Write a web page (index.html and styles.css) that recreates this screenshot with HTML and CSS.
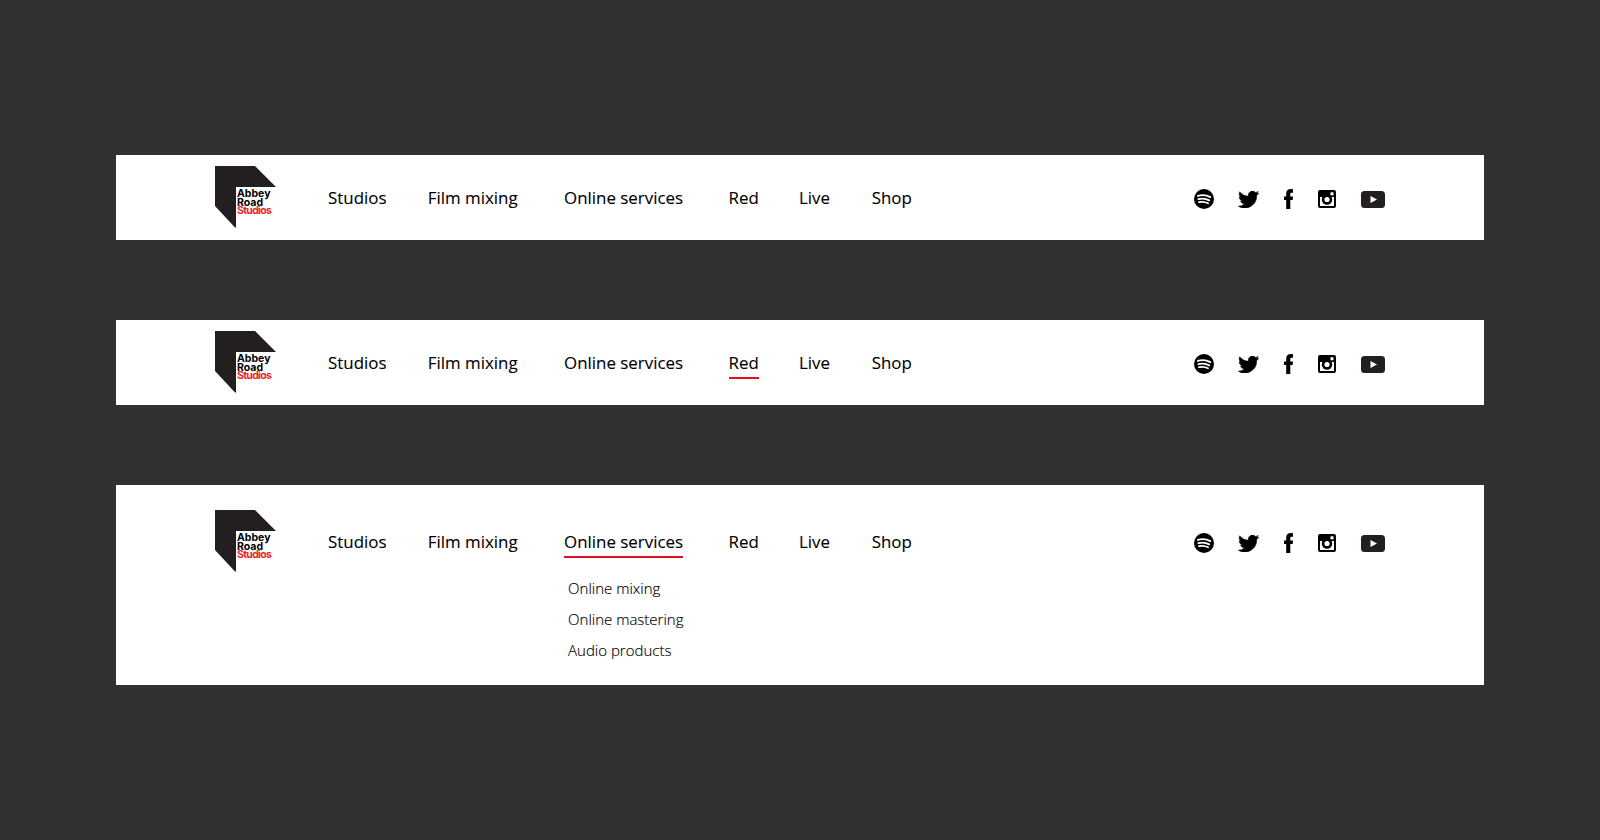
FILE: index.html
```html
<!DOCTYPE html>
<html lang="en">
<head>
<meta charset="utf-8">
<title>Abbey Road Studios navigation</title>
<link rel="stylesheet" href="styles.css">
</head>
<body>
<svg class="defs" width="0" height="0" aria-hidden="true">
  <symbol id="mark" viewBox="0 0 62 62">
    <path d="M0 0H40L61 21H21V61.500H20L0 40Z" fill="#231f20"/>
  </symbol>
  <symbol id="spotify" viewBox="0 0 20 20">
    <circle cx="10" cy="10" r="10" fill="#000"/>
    <path d="M3.800 6.900C8 5.700 12.600 6 16.300 8.100M4.400 10.200C8 9.300 12 9.600 15.200 11.400M5 13.200C8.100 12.500 11.300 12.800 14 14.300" fill="none" stroke="#fff" stroke-width="1.800" stroke-linecap="round"/>
  </symbol>
  <symbol id="twitter" viewBox="0 0 24 20">
    <path d="M24 2.400c-.9.400-1.800.7-2.800.8 1-.6 1.800-1.600 2.200-2.700-.9.600-2 1-3.100 1.200A4.900 4.900 0 0 0 11.900 6.200C7.800 6 4.200 4 1.700.9.400 3.100 1 6 3.200 7.500c-.8 0-1.600-.2-2.200-.6 0 2.400 1.700 4.400 3.900 4.900-.7.200-1.500.2-2.200.1.600 2 2.400 3.400 4.600 3.400A9.900 9.900 0 0 1 0 17.800 14 14 0 0 0 21.600 5.400c1-.7 1.800-1.600 2.400-3z" fill="#000" stroke="#000" stroke-width=".6"/>
  </symbol>
  <symbol id="facebook" viewBox="0 0 9 20">
    <path d="M6.300 20V11h2.400l.3-3.500H6.300V5.300c0-1 .3-1.500 1.500-1.500H9V.2C8.700.1 7.800 0 6.800 0 4 0 2.200 1.500 2.200 4.500v3H0V11h2.200v9z" fill="#000"/>
  </symbol>
  <symbol id="instagram" viewBox="0 0 18 18">
    <rect width="18" height="18" rx="2" fill="#000"/>
    <rect x="2" y="7" width="14" height="9" fill="#fff"/>
    <rect x="12.500" y="2.300" width="3" height="3" fill="#fff"/>
    <circle cx="9" cy="9.500" r="5.200" fill="#000"/>
    <circle cx="9" cy="9.500" r="2.600" fill="#fff"/>
  </symbol>
  <symbol id="youtube" viewBox="0 0 24 17">
    <path fill-rule="evenodd" d="M3.500 0h17A3.500 3.500 0 0 1 24 3.500v10a3.500 3.500 0 0 1-3.500 3.500h-17A3.500 3.500 0 0 1 0 13.500v-10A3.500 3.500 0 0 1 3.500 0zM9.500 5v7l6.500-3.500z" fill="#231f20"/>
  </symbol>
</svg>

<main class="stack">
  <header class="bar">
    <a class="logo"><svg class="mark"><use href="#mark"/></svg><span class="wordmark"><span>Abbey</span><span>Road</span><span class="wordmark-red">Studios</span></span></a>
    <nav class="nav">
      <a class="nav-item item-studios">Studios</a>
      <a class="nav-item item-film">Film mixing</a>
      <a class="nav-item item-online">Online services</a>
      <a class="nav-item item-red">Red</a>
      <a class="nav-item item-live">Live</a>
      <a class="nav-item item-shop">Shop</a>
    </nav>
    <div class="social">
      <svg class="ic ic-spotify"><use href="#spotify"/></svg>
      <svg class="ic ic-twitter"><use href="#twitter"/></svg>
      <svg class="ic ic-facebook"><use href="#facebook"/></svg>
      <svg class="ic ic-instagram"><use href="#instagram"/></svg>
      <svg class="ic ic-youtube"><use href="#youtube"/></svg>
    </div>
  </header>

  <header class="bar">
    <a class="logo"><svg class="mark"><use href="#mark"/></svg><span class="wordmark"><span>Abbey</span><span>Road</span><span class="wordmark-red">Studios</span></span></a>
    <nav class="nav">
      <a class="nav-item item-studios">Studios</a>
      <a class="nav-item item-film">Film mixing</a>
      <a class="nav-item item-online">Online services</a>
      <a class="nav-item item-red is-active">Red</a>
      <a class="nav-item item-live">Live</a>
      <a class="nav-item item-shop">Shop</a>
    </nav>
    <div class="social">
      <svg class="ic ic-spotify"><use href="#spotify"/></svg>
      <svg class="ic ic-twitter"><use href="#twitter"/></svg>
      <svg class="ic ic-facebook"><use href="#facebook"/></svg>
      <svg class="ic ic-instagram"><use href="#instagram"/></svg>
      <svg class="ic ic-youtube"><use href="#youtube"/></svg>
    </div>
  </header>

  <header class="bar bar-open">
    <a class="logo"><svg class="mark"><use href="#mark"/></svg><span class="wordmark"><span>Abbey</span><span>Road</span><span class="wordmark-red">Studios</span></span></a>
    <nav class="nav">
      <a class="nav-item item-studios">Studios</a>
      <a class="nav-item item-film">Film mixing</a>
      <div class="nav-group item-online">
        <a class="nav-item is-active">Online services</a>
        <ul class="submenu">
          <li>Online mixing</li>
          <li>Online mastering</li>
          <li>Audio products</li>
        </ul>
      </div>
      <a class="nav-item item-red">Red</a>
      <a class="nav-item item-live">Live</a>
      <a class="nav-item item-shop">Shop</a>
    </nav>
    <div class="social">
      <svg class="ic ic-spotify"><use href="#spotify"/></svg>
      <svg class="ic ic-twitter"><use href="#twitter"/></svg>
      <svg class="ic ic-facebook"><use href="#facebook"/></svg>
      <svg class="ic ic-instagram"><use href="#instagram"/></svg>
      <svg class="ic ic-youtube"><use href="#youtube"/></svg>
    </div>
  </header>
</main>
</body>
</html>
```
FILE: styles.css
```css
* { box-sizing: border-box; }
html, body { margin: 0; height: 100%; }
body { background: #313131; color: #000; font-family: "Open Sans", sans-serif; overflow: hidden; }
.defs { position: absolute; }
.stack { display: flex; flex-direction: column; gap: 80px; padding: 155px 116px 0; }
.bar { height: 85px; background: #fff; display: flex; align-items: flex-start; padding: 11px 0 0 99px; }
.bar-open { height: 200px; padding-top: 25px; }
.logo { position: relative; display: block; width: 62px; height: 62px; flex: none; }
.mark { display: block; width: 62px; height: 62px; }
.wordmark { position: absolute; left: 22px; top: 24px; display: flex; flex-direction: column; font-family: Inter, "Liberation Sans", sans-serif; font-weight: 700; font-size: 10.500px; line-height: 8.700px; letter-spacing: 0; }
.wordmark-red { color: #ed1c24; letter-spacing: -0.7px; }
.nav { display: flex; align-items: flex-start; margin-left: 51px; padding-top: 20px; }
.nav-group { display: flex; flex-direction: column; }
.nav-item { display: block; font-size: 16.900px; line-height: 24px; padding-bottom: 2px; border-bottom: 2px solid transparent; white-space: nowrap; -webkit-text-stroke: 0.1px #000; }
.nav-item.is-active { border-bottom-color: #e2101f; }
.item-film { margin-left: 41.300px; }
.item-online { margin-left: 46.500px; }
.item-red { margin-left: 45.500px; }
.item-live { margin-left: 40.200px; }
.item-shop { margin-left: 41.700px; }
.submenu { list-style: none; margin: 0 -4px 0 0; padding: 15px 0 0 4px; font-size: 15px; font-weight: 300; line-height: 31px; white-space: nowrap; -webkit-text-stroke: 0.15px #000; }
.social { margin-left: auto; margin-right: 99px; display: flex; align-items: center; height: 26px; margin-top: 20px; }
.ic { display: block; flex: none; }
.ic-spotify { width: 20px; height: 20px; }
.ic-twitter { width: 21px; height: 17px; margin-left: 24px; }
.ic-facebook { width: 9px; height: 20px; margin-left: 25px; }
.ic-instagram { width: 18px; height: 18px; margin-left: 25px; }
.ic-youtube { width: 24px; height: 17px; margin-left: 25px; }
```
